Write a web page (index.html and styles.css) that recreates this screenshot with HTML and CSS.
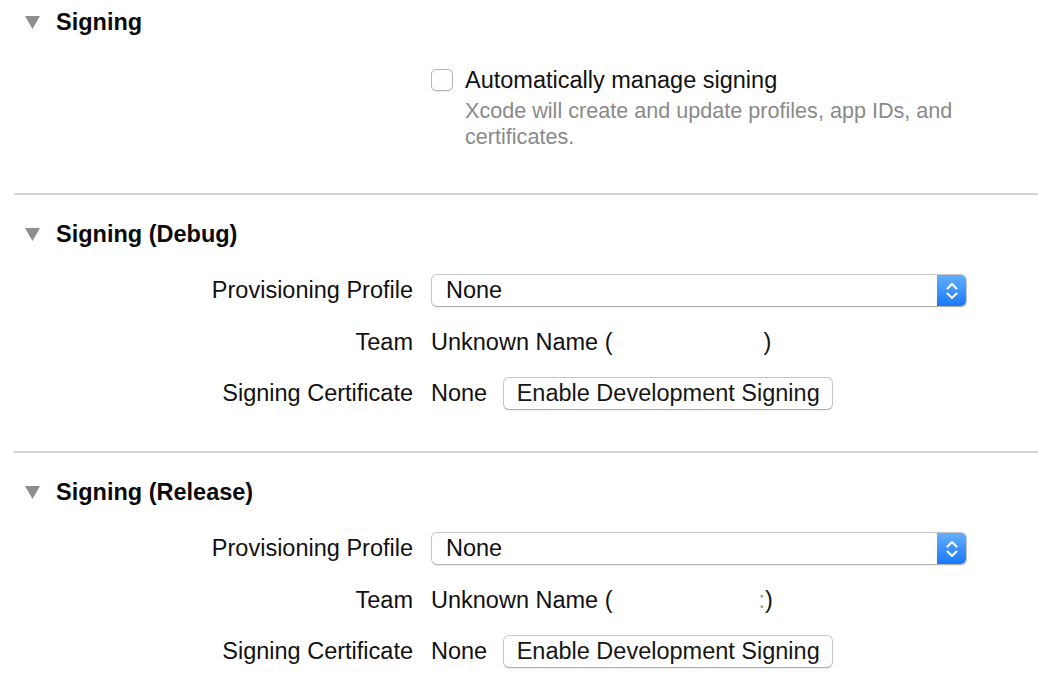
FILE: index.html
```html
<!DOCTYPE html>
<html>
<head>
<meta charset="utf-8">
<link rel="stylesheet" href="styles.css">
</head>
<body>
<div class="pane">
  <section class="group group-first">
    <div class="group-head">
      <svg class="disclosure" width="15" height="13" viewBox="0 0 15 13"><polygon points="0,0 15,0 7.5,13" fill="#8e8e8e"/></svg>
      <h2 class="group-title">Signing</h2>
    </div>
    <div class="auto">
      <span class="checkbox"></span>
      <div class="auto-text">
        <div class="auto-label">Automatically manage signing</div>
        <p class="auto-desc">Xcode will create and update profiles, app IDs, and<br>certificates.</p>
      </div>
    </div>
  </section>
  <div class="divider"></div>
  <section class="group">
    <div class="group-head">
      <svg class="disclosure" width="15" height="13" viewBox="0 0 15 13"><polygon points="0,0 15,0 7.5,13" fill="#8e8e8e"/></svg>
      <h2 class="group-title">Signing (Debug)</h2>
    </div>
    <div class="form">
      <div class="label">Provisioning Profile</div>
      <div class="popup">
        <span class="popup-value">None</span>
        <span class="popup-arrows"><svg width="14" height="22" viewBox="0 0 14 22"><path d="M2.5 8.5 L7 4 L11.5 8.5 M2.5 13.5 L7 18 L11.5 13.5" fill="none" stroke="#fff" stroke-width="2" stroke-linecap="round" stroke-linejoin="round"/></svg></span>
      </div>
      <div class="label">Team</div>
      <div class="value">Unknown Name (<span class="redacted"></span>)</div>
      <div class="label">Signing Certificate</div>
      <div class="value">None<button class="btn">Enable Development Signing</button></div>
    </div>
  </section>
  <div class="divider"></div>
  <section class="group">
    <div class="group-head">
      <svg class="disclosure" width="15" height="13" viewBox="0 0 15 13"><polygon points="0,0 15,0 7.5,13" fill="#8e8e8e"/></svg>
      <h2 class="group-title">Signing (Release)</h2>
    </div>
    <div class="form">
      <div class="label">Provisioning Profile</div>
      <div class="popup">
        <span class="popup-value">None</span>
        <span class="popup-arrows"><svg width="14" height="22" viewBox="0 0 14 22"><path d="M2.5 8.5 L7 4 L11.5 8.5 M2.5 13.5 L7 18 L11.5 13.5" fill="none" stroke="#fff" stroke-width="2" stroke-linecap="round" stroke-linejoin="round"/></svg></span>
      </div>
      <div class="label">Team</div>
      <div class="value">Unknown Name (<span class="redacted redacted-short"></span><span class="faint">:</span>)</div>
      <div class="label">Signing Certificate</div>
      <div class="value">None<button class="btn">Enable Development Signing</button></div>
    </div>
  </section>
</div>
</body>
</html>
```
FILE: styles.css
```css
html, body {
  margin: 0;
  padding: 0;
  background: #ffffff;
}
body {
  font-family: "Liberation Sans", Arial, sans-serif;
  color: #111111;
  font-size: 23.5px;
}
.pane {
  width: 1038px;
  height: 694px;
  overflow: hidden;
}
.group {
  padding-top: 26px;
  padding-bottom: 41px;
}
.group-first {
  padding-top: 9px;
  padding-bottom: 43px;
}
.group-head {
  display: flex;
  align-items: center;
  height: 26px;
  padding-left: 25px;
}
.disclosure {
  flex: none;
  margin-right: 16px;
}
.group-title {
  margin: 0;
  font-size: 23.5px;
  font-weight: bold;
  line-height: 26px;
  color: #0a0a0a;
}
.auto {
  display: flex;
  align-items: flex-start;
  margin-top: 32px;
  padding-left: 431px;
}
.checkbox {
  flex: none;
  box-sizing: border-box;
  width: 22px;
  height: 22px;
  margin-top: 2px;
  margin-right: 12px;
  border: 1px solid #b4b4b4;
  border-radius: 5px;
  background: #fff;
  box-shadow: 0 1px 1px rgba(0,0,0,0.08);
}
.auto-label {
  line-height: 26px;
}
.auto-desc {
  margin: 5px 0 0;
  font-size: 21.6px;
  line-height: 26px;
  color: #8a8a8a;
}
.divider {
  height: 2px;
  margin-left: 14px;
  background: #d4d4d4;
}
.form {
  display: grid;
  grid-template-columns: 413px 536px;
  grid-auto-rows: 33px;
  column-gap: 18px;
  row-gap: 18.5px;
  margin-top: 27px;
  align-items: center;
}
.label {
  text-align: right;
  white-space: nowrap;
}
.value {
  display: flex;
  align-items: center;
  white-space: nowrap;
}
.redacted {
  display: inline-block;
  width: 151px;
}
.redacted-short {
  width: 146px;
}
.faint {
  color: #9a9a9a;
}
.popup {
  box-sizing: border-box;
  height: 33px;
  display: flex;
  align-items: center;
  border: 1px solid #c6c6c6;
  border-bottom-color: #b0b0b0;
  border-radius: 6px;
  background: #fff;
  box-shadow: 0 1px 1px rgba(0,0,0,0.06);
  overflow: hidden;
}
.popup-value {
  flex: 1;
  padding-left: 14px;
}
.popup-arrows {
  flex: none;
  width: 29px;
  height: 100%;
  display: flex;
  align-items: center;
  justify-content: center;
  background: linear-gradient(#64aefc, #1a78f8);
}
.btn {
  box-sizing: border-box;
  height: 33px;
  width: 330px;
  margin-left: 16px;
  padding: 0;
  font-family: inherit;
  font-size: 23.5px;
  color: #161616;
  background: #fff;
  border: 1px solid #c6c6c6;
  border-bottom-color: #adadad;
  border-radius: 6px;
  box-shadow: 0 1px 1px rgba(0,0,0,0.06);
}
```
